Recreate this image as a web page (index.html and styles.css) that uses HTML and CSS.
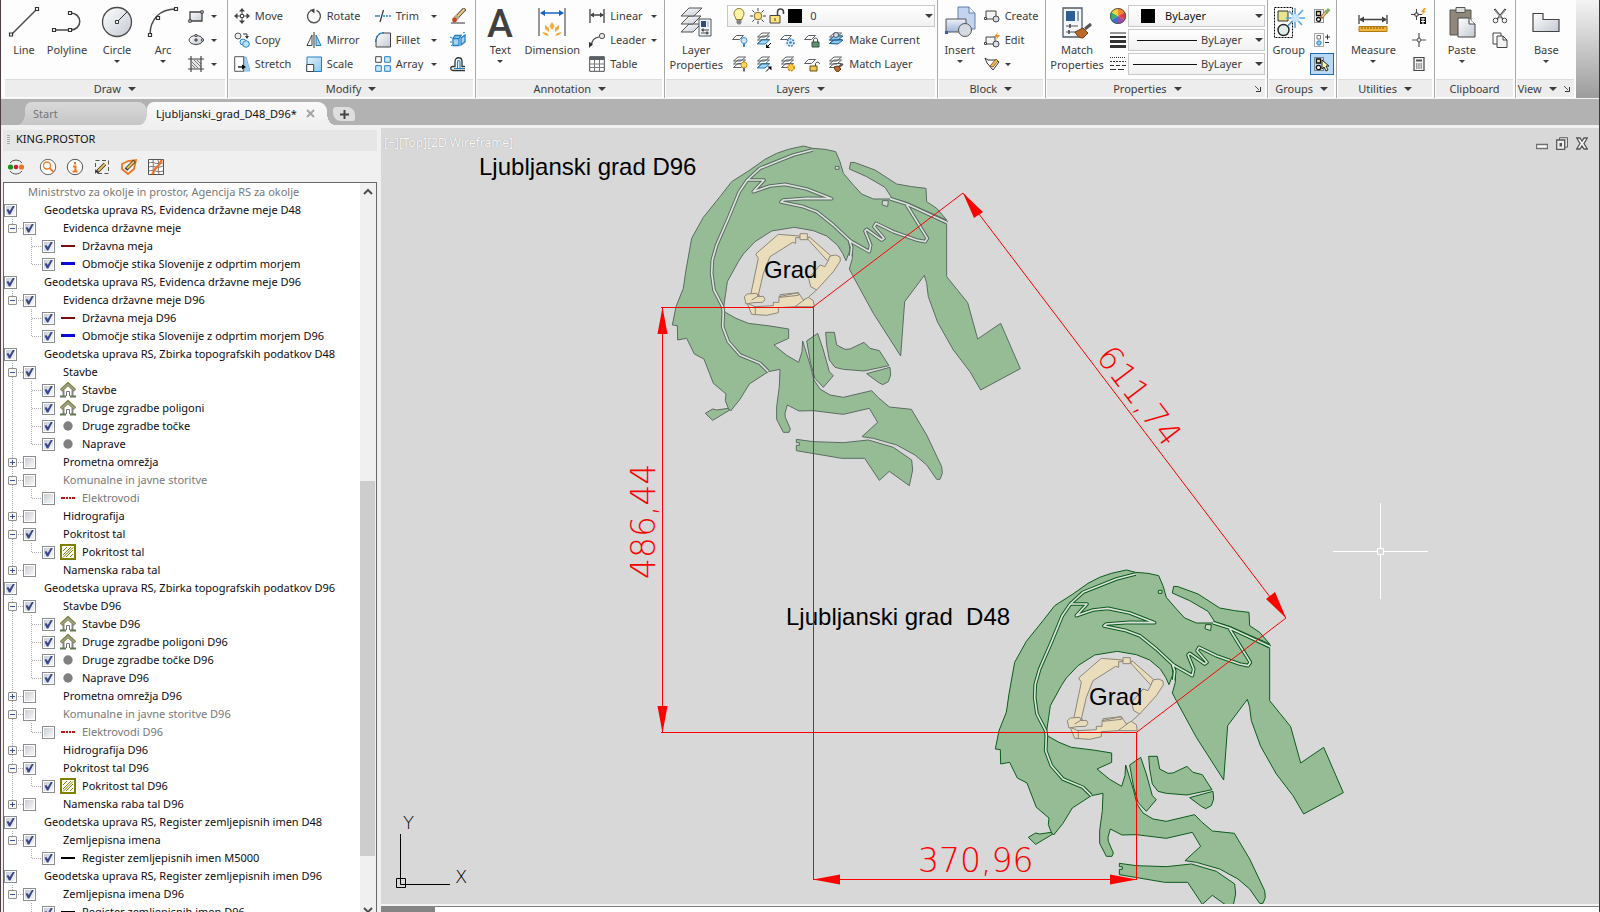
FILE: index.html
```html
<!DOCTYPE html>
<html lang="sl">
<head>
<meta charset="utf-8">
<title>Ljubljanski_grad_D48_D96</title>
<link rel="stylesheet" href="styles.css">
</head>
<body>
<svg class="defs" aria-hidden="true">
  <defs>
    <linearGradient id="steel" x1="0" y1="0" x2="1" y2="1"><stop offset="0" stop-color="#fff"/><stop offset="1" stop-color="#c3c9d3"/></linearGradient>
    <linearGradient id="sky" x1="0" y1="0" x2="1" y2="1"><stop offset="0" stop-color="#e3f3fc"/><stop offset="1" stop-color="#8cc8ec"/></linearGradient>
    <linearGradient id="bluegrey" x1="0" y1="0" x2="0" y2="1"><stop offset="0" stop-color="#eef2fa"/><stop offset="1" stop-color="#9fb2d8"/></linearGradient>
    <symbol id="house" viewBox="0 0 16 16"><path d="M1 8.500 8 2l7 6.500" fill="none" stroke="#7d8434" stroke-width="3.500"/><path d="M1 8.500 8 2.500l7 6" fill="none" stroke="#a2a2a2" stroke-width="1.500"/><path d="M3.500 8v6M12.500 8v6" stroke="#858585" stroke-width="2"/><path d="M6.500 14V9.500h3V14" fill="none" stroke="#757575"/><path d="M0 14.500h6M10 14.500h6" stroke="#5f7a50" stroke-width="2"/></symbol>
    <symbol id="dot" viewBox="0 0 16 16"><circle cx="8" cy="8" r="4.700" fill="#808080"/></symbol>
    <symbol id="hatch" viewBox="0 0 16 16"><rect x="1" y="1" width="14" height="14" fill="#fff" stroke="#808000" stroke-width="2"/><path d="M3 7l4-4M3 11l8-8M3 13.500 13 3.500M6 13l7-7M10 13l3-3" stroke="#808000"/></symbol>
    <symbol id="line-brown" viewBox="0 0 16 16"><path d="M1 8h14" stroke="#7b0f0f" stroke-width="2"/></symbol>
    <symbol id="line-blue" viewBox="0 0 16 16"><path d="M1 7.500h14" stroke="#0a0ad2" stroke-width="3"/></symbol>
    <symbol id="line-black" viewBox="0 0 16 16"><path d="M1 8h14" stroke="#000" stroke-width="2"/></symbol>
    <symbol id="line-dash" viewBox="0 0 16 16"><path d="M1 8h14" stroke="#c01414" stroke-width="2" stroke-dasharray="4 1 2 1 2 1"/></symbol>
    <symbol id="sheets" viewBox="0 0 16 16"><path d="M1.500 11.500 6 7.500h7.500l-4.500 4zM1.500 8l4.500-4h7.500L9 8zM1.500 5 6 1h7.500L9 5z" fill="#fff" stroke="#5a5f66"/></symbol>
    <symbol id="sheet" viewBox="0 0 16 16"><path d="M.500 7.500l4-4h7l-4 4z" fill="#fff" stroke="#5a5f66"/></symbol>

    <g id="castle-hill" stroke-linejoin="round">
      <g class="green">
        <path d="M458 55 430 48 385 58 350 70 315 88 270 120 215 155 180 200 130 262 95 325 78 420 70 475 48 530 37 585 52 587 53 630 80 625 103 672 132 687 160 760 198 792 196 812 205 835 212 843 240 808 268 762 325 725 360 718 358 770 350 830 350 868 370 907 387 907 391 897 376 862 375 850 382 825 417 843 460 842 550 853 628 835 653 877 606 920 640 925 710 945 765 975 800 1005 830 1048 840 1048 847 1030 845 1010 800 915 754 838 688 831 655 803 635 782 550 802 510 795 480 777 462 750 452 710 428 633 426 665 416 697 380 676 342 645 386 625 386 597 330 588 265 580 228 565 196 547 190 538 197 490 202 455 235 395 250 372 285 335 335 303 403 292 460 302 500 318 532 345 548 370 558 392 570 360 566 330 578 345 577 385 568 417 580 440 640 550 722 678 734 515 793 436 800 460 805 500 833 577 880 660 930 725 962 780 1081 716 1022 580 953 627 923 518 860 440 860 283 740 224 692 207 640 207 605 192 580 165 550 130 540 95 527 65 495 58z"/>
        <path d="M572 97 585 98 645 120 710 162 755 170 798 175 800 215 830 235 860 270 740 217 695 203 675 172 620 140 568 117z"/>
        <path d="M440 633 473 610 490 660 508 725 520 737 490 772 465 745 452 700z"/>
        <path d="M497 607H523L530 645 555 658 570 657 612 637 630 655 658 662 687 707 612 723 550 718 525 712 508 690 500 645z"/>
        <path d="M620 731 690 712 692 735 685 755 668 764 655 757z"/>
        <path d="M409 928 460 935 550 938 625 930 700 952 755 990 758 1020 748 1067 688 1024 658 1051 614 985H545L409 962V946H418V938H409z"/>
        <path d="M136 850 158 837 170 840 205 835 208 841 158 871z"/>
      </g>
      <g class="road">
        <path d="M458 60 400 75 300 115 262 150 238 185 205 265 170 345 157 390 155 430 162 480 188 530 190 545 188 590 205 635 240 675 300 700 325 725"/>
        <path d="M690 206 740 222 862 278M740 225 802 325 795 335 770 330 700 305 648 280 642 290 672 325 665 330 620 298 615 303 632 345 628 365 575 335 566 328 520 285 470 245 430 230 363 216 370 210 440 205 515 206 440 177 375 163 330 168 280 185 312 150 262 150M568 330 575 352 572 378"/>
      </g>
      <g class="road-bed">
        <path d="M458 60 400 75 300 115 262 150 238 185 205 265 170 345 157 390 155 430 162 480 188 530 190 545 188 590 205 635 240 675 300 700 325 725"/>
        <path d="M690 206 740 222 862 278M740 225 802 325 795 335 770 330 700 305 648 280 642 290 672 325 665 330 620 298 615 303 632 345 628 365 575 335 566 328 520 285 470 245 430 230 363 216 370 210 440 205 515 206 440 177 375 163 330 168 280 185 312 150 262 150M568 330 575 352 572 378"/>
      </g>
      <g class="plot"><path d="M526 109h11v9h-11z"/><path d="M668 212h17l-2 18-17-6z"/></g>
      <g class="walls">
        <path d="M355 313 418 318V323H407V340L398 337 330 380 310 430 295 495 273 490 295 385 287 372z"/>
        <path d="M443 327 447 320 512 377 503 393z"/>
        <path d="M420 311h22v18h-22z"/>
        <path d="M503 395 510 378 527 375 540 381 541 393 520 425 470 480 452 470 446 445 480 405 495 410z"/>
        <path d="M262 520 285 530 340 527V517H357V500L415 488 430 510 445 502 460 512 463 530 405 530 355 533V548L320 556 275 553z"/>
        <path d="M253 500 262 492 290 490 295 500 310 499 315 508 308 517 280 518 258 522z"/>
        <path d="M275 510 300 495M286 530V553M360 494l55-6v8l-55 6zM405 530l30-22M445 502l25-22" fill="none"/>
      </g>
    </g>
  </defs>
</svg>

<header class="ribbon">
  <section class="panel draw" aria-label="Draw">
    <div class="panel-body">
      <button class="big"><svg width="32" height="32" viewBox="0 0 32 32"><path d="M4 28 28 4" stroke="#4a4a4a" stroke-width="1.500"/><g fill="#fff" stroke="#333" stroke-width="1.200"><path d="M1.500 27h3v3h-3zM27.500 1.500h3v3h-3z"/></g></svg><span>Line</span></button>
      <button class="big"><svg width="32" height="32" viewBox="0 0 32 32"><path d="M3 24h16c13 0 13-17 0-17" fill="none" stroke="#4a4a4a" stroke-width="1.500"/><g fill="#fff" stroke="#333" stroke-width="1.200"><path d="M1.500 22.500h3v3h-3zM17.500 22.500h3v3h-3zM17.500 5.500h3v3h-3z"/></g></svg><span>Polyline</span></button>
      <button class="big"><svg width="32" height="32" viewBox="0 0 32 32"><circle cx="16" cy="16" r="14.500" fill="url(#steel)" stroke="#4a4a4a" stroke-width="1.300"/><path d="M16 16 26 6" stroke="#333"/><path d="M14.500 14.500h3v3h-3z" fill="#fff" stroke="#333"/></svg><span>Circle</span><i class="caret"></i></button>
      <button class="big"><svg width="32" height="32" viewBox="0 0 32 32"><path d="M3 29C3 13 13 3 29 3" fill="none" stroke="#4a4a4a" stroke-width="1.500"/><g fill="#fff" stroke="#333" stroke-width="1.200"><path d="M1.500 27.500h3v3h-3zM9.500 10.500h3v3h-3zM27.500 1.500h3v3h-3z"/></g></svg><span>Arc</span><i class="caret"></i></button>
      <div class="stack tight">
        <button class="small" aria-label="Rectangle"><svg width="16" height="16" viewBox="0 0 16 16"><path d="M2 4h12v9H2z" fill="url(#steel)" stroke="#444" stroke-width="1.300"/><path d="M.800 11.800h2.400v2.400H.800zM12.800 2.800h2.400v2.400h-2.400z" fill="#fff" stroke="#333"/></svg><i class="caret"></i></button>
        <button class="small" aria-label="Ellipse"><svg width="16" height="16" viewBox="0 0 16 16"><ellipse cx="8" cy="8" rx="7" ry="4.500" fill="url(#steel)" stroke="#444"/><path d="M8 6v4M6 8h4" stroke="#333"/><path d="M7 2.500h2v2H7zM13.500 7h2v2h-2z" fill="#fff" stroke="#333" stroke-width=".800"/></svg><i class="caret"></i></button>
        <button class="small" aria-label="Hatch"><svg width="16" height="16" viewBox="0 0 16 16"><path d="M3 3h10v10H3z" fill="#e6e6e6"/><path d="M4 6l6 6M4 9l3 3M6 4l7 7M9 4l4 4" stroke="#777"/><path d="M3 0v16M13 0v16M0 3h16M0 13h16" stroke="#444" stroke-width="1.200"/></svg><i class="caret"></i></button>
      </div>
    </div>
    <button class="panel-title">Draw <i class="caret lg"></i></button>
  </section>

  <section class="panel modify" aria-label="Modify">
    <div class="panel-body">
      <div class="stack">
        <button class="small"><svg width="16" height="16" viewBox="0 0 16 16"><path d="M8 0l3 3.500H5zM8 16l3-3.500H5zM0 8l3.500-3v6zM16 8l-3.500-3v6z" fill="#444"/><path d="M8 3v3M8 10v3M3 8h3M10 8h3" stroke="#444"/><path d="M6.500 6.500h3v3h-3z" fill="#fff" stroke="#444"/></svg><span>Move</span></button>
        <button class="small"><svg width="16" height="16" viewBox="0 0 16 16"><circle cx="4" cy="4" r="3" fill="#eee" stroke="#555"/><circle cx="9" cy="10" r="3" fill="#d5ebfa" stroke="#2b88c8"/><circle cx="12" cy="12" r="3.300" fill="#bfe0f6" stroke="#2b88c8"/><path d="M9 2h4v3" fill="none" stroke="#333"/><path d="M11 4h4l-2 3z" fill="#333"/></svg><span>Copy</span></button>
        <button class="small"><svg width="16" height="16" viewBox="0 0 16 16"><path d="M9 1h3l4 14H9z" fill="#9dd0f2" stroke="#7bb8e2"/><path d="M.700.700h9v14.600h-9z" fill="#fff" stroke="#555"/><path d="M4 11h5" stroke="#000" stroke-width="1.300"/><path d="M8 8.500l4 2.500-4 2.500z"/></svg><span>Stretch</span></button>
      </div>
      <div class="stack">
        <button class="small"><svg width="16" height="16" viewBox="0 0 16 16"><path d="M5 2.500a6.500 6.500 0 1 0 5.500-.200" fill="none" stroke="#555" stroke-width="1.400"/><path d="M8.500.500v5L4 2z" fill="#444"/></svg><span>Rotate</span></button>
        <button class="small"><svg width="16" height="16" viewBox="0 0 16 16"><path d="M6 3v10.500H1z" fill="#fff" stroke="#444"/><path d="M10 3v10.500h5z" fill="#9dd0f2" stroke="#1f7fc4"/><path d="M8 0v16" stroke="#333"/></svg><span>Mirror</span></button>
        <button class="small"><svg width="16" height="16" viewBox="0 0 16 16"><path d="M1 1h14.500v14.500H1z" fill="url(#sky)" stroke="#1f7fc4"/><path d="M.700 8.500h7v7h-7z" fill="#fff" stroke="#444"/></svg><span>Scale</span></button>
      </div>
      <div class="stack">
        <button class="small wide"><svg width="16" height="16" viewBox="0 0 16 16"><path d="M0 8h5M8 8h2M11 8h2M14 8h2" stroke="#2b88c8" stroke-width="1.300"/><path d="M8.500 2 5 14" stroke="#333" stroke-width="1.200"/></svg><span>Trim</span><i class="caret"></i></button>
        <button class="small wide"><svg width="16" height="16" viewBox="0 0 16 16"><path d="M8 1h7.500v14H1V9c0-4.500 3-8 7-8z" fill="url(#steel)" stroke="#444"/><path d="M.700 10C.700 4.500 4 .700 9 .700" fill="none" stroke="#1f7fc4" stroke-width="1.400" stroke-dasharray="3 1"/></svg><span>Fillet</span><i class="caret"></i></button>
        <button class="small wide"><svg width="16" height="16" viewBox="0 0 16 16"><path d="M.700.700h5.600v5.600H.700z" fill="#fff" stroke="#444"/><path d="M9.700.700h5.600v5.600H9.700zM.700 9.700h5.600v5.600H.700zM9.700 9.700h5.600v5.600H9.700z" fill="#cfe8f8" stroke="#1f7fc4"/></svg><span>Array</span><i class="caret"></i></button>
      </div>
      <div class="stack">
        <button class="small" aria-label="Erase"><svg width="16" height="16" viewBox="0 0 16 16"><path d="M15 .500 7 9" stroke="#3a3a3a" stroke-width="4"/><path d="M14.500 1 7 9" stroke="#f1c878" stroke-width="2.500"/><path d="M8 8l-3 3" stroke="#b9a68c" stroke-width="5"/><circle cx="4.500" cy="12" r="2.400" fill="#c4471c"/><path d="M1 15h14" stroke="#333"/></svg></button>
        <button class="small" aria-label="Explode"><svg width="16" height="16" viewBox="0 0 16 16"><path d="M3 6.500h6v7H3zM3 6.500l2-3h6l-2 3M11 6l4-3v7l-4 3z" fill="#a4d4f2" stroke="#1f7fc4" stroke-width="1.300"/><path d="M0 5l2 1M0 10h2M13 1l2-1M1 14l1-1" stroke="#1f7fc4"/></svg></button>
        <button class="small" aria-label="Offset"><svg width="16" height="16" viewBox="0 0 16 16"><path d="M15 14.500H3c-3 0-3-4 0-4h2V5.500c0-5 7-5 7 0v5h3" fill="none" stroke="#333" stroke-width="1.300"/><path d="M15 12.500H4M7.500 12V6c0-2 2.500-2 2.500 0v6" fill="none" stroke="#1f7fc4" stroke-width="1.200"/></svg></button>
      </div>
    </div>
    <button class="panel-title">Modify <i class="caret lg"></i></button>
  </section>

  <section class="panel annotation" aria-label="Annotation">
    <div class="panel-body">
      <button class="big"><svg width="32" height="32" viewBox="0 0 32 32"><text x="16" y="31" text-anchor="middle" class="letter">A</text></svg><span>Text</span><i class="caret"></i></button>
      <button class="big"><svg width="32" height="32" viewBox="0 0 32 32"><path d="M3 2v28M29 2v28" stroke="#555" stroke-width="1.200"/><path d="M5 7h22" stroke="#1763c0" stroke-width="1.500"/><path d="M4 7l5-3v6zM28 7l-5-3v6z" fill="#1763c0"/><path d="M16 16l2.500 4-2.500 4-2.500-4zM9 19l4 3v4l-4-3zM23 19l-4 3v4l4-3zM6 26l5 1 2 3-4-1zM26 26l-5 1-2 3 4-1z" fill="#f2a93c"/></svg><span>Dimension</span></button>
      <div class="stack">
        <button class="small wide"><svg width="16" height="16" viewBox="0 0 16 16"><path d="M1 1v14M15 1v14M2 7h12" stroke="#444" stroke-width="1.300"/><path d="M1 7l4-2.500v5zM15 7l-4-2.500v5z" fill="#444"/></svg><span>Linear</span><i class="caret"></i></button>
        <button class="small wide"><svg width="16" height="16" viewBox="0 0 16 16"><path d="M2 14C3 8 5 6 10 5" fill="none" stroke="#444" stroke-width="1.200"/><path d="M0 16V10l4 2z" fill="#333"/><circle cx="13" cy="4" r="2.700" fill="#e4e4e4" stroke="#555"/></svg><span>Leader</span><i class="caret"></i></button>
        <button class="small"><svg width="16" height="16" viewBox="0 0 16 16"><path d="M.700.700h14.600v14.600H.700z" fill="#fff" stroke="#4a4f55"/><path d="M1 1h14v3H1z" fill="#586068"/><path d="M1 8h14M1 11.500h14M5.500 4v11M10.500 4v11" stroke="#777"/></svg><span>Table</span></button>
      </div>
    </div>
    <button class="panel-title">Annotation <i class="caret lg"></i></button>
  </section>

  <section class="panel layers" aria-label="Layers">
    <div class="panel-body">
      <button class="big"><svg width="32" height="32" viewBox="0 0 32 32"><g fill="url(#steel)" stroke="#555"><path d="M1 26l8-8h12l-8 8z"/><path d="M1 18l8-8h12l-8 8z"/><path d="M1 10l8-8h13l-8 8z"/></g><path d="M19 13h12v17H19z" fill="#f3f6fa" stroke="#4a5560"/><path d="M21 15h5v6h-5z" fill="#2c4f7c"/><path d="M28 15v6" stroke="#8fa3ba"/><path d="M21 24h8M21 27h8" stroke="#444"/><path d="M23 22.500v3M27 25.500v3" stroke="#444" stroke-width="1.500"/></svg><span>Layer<br>Properties</span></button>
      <div class="layer-tools">
        <label class="combo current">
          <svg width="16" height="18" viewBox="0 0 16 18"><path d="M5 12.500C5 10 3 9.500 3 6.500a5 5 0 0 1 10 0c0 3-2 3.500-2 6z" fill="#fff3a6" stroke="#8a7a2c"/><path d="M5.500 13h5v3l-1.500 1.500H7L5.500 16z" fill="#858585"/></svg>
          <svg width="16" height="16" viewBox="0 0 16 16"><path d="M8 0v3M8 13v3M0 8h3M13 8h3M2.300 2.300l2.200 2.200M11.500 11.500l2.200 2.200M13.700 2.300l-2.200 2.200M4.500 11.500l-2.200 2.200" stroke="#444"/><circle cx="8" cy="8" r="3.800" fill="#ffe27a" stroke="#7a6a2c"/></svg>
          <svg width="16" height="16" viewBox="0 0 16 16"><path d="M8.500 8V4c0-4 6-4 6 0v2" fill="none" stroke="#444" stroke-width="1.500"/><path d="M1 7.500h10v7.500H1z" fill="#ffe27a" stroke="#444"/><path d="M6 10v3" stroke="#444"/></svg>
          <i class="swatch"></i>
          <select aria-label="Layer"><option>0</option></select><i class="caret lg"></i>
        </label>
        <div class="tool-row">
          <button class="small" aria-label="Off"><svg width="16" height="16" viewBox="0 0 16 16"><use href="#sheet"/><circle cx="12" cy="8.500" r="3" fill="#cfe6fa" stroke="#3c8dcc"/><path d="M11 11.500h2V15h-2z" fill="#3c8dcc"/></svg></button>
          <button class="small" aria-label="Isolate"><svg width="16" height="16" viewBox="0 0 16 16"><use href="#sheets"/><path d="M1.500 12 6 8h7.500L9 12z" fill="#a9d8f5" stroke="#1f7fc4"/><path d="M15 11l-4 4" stroke="#000"/><path d="M10 12v4h4z"/></svg></button>
          <button class="small" aria-label="Freeze"><svg width="16" height="16" viewBox="0 0 16 16"><use href="#sheet"/><circle cx="10.500" cy="10.500" r="3.500" fill="#dcefff" stroke="#2b7fc8" stroke-width="1.500" stroke-dasharray="2 1"/><circle cx="10.500" cy="10.500" r="1.300" fill="#2b7fc8"/></svg></button>
          <button class="small" aria-label="Lock"><svg width="16" height="16" viewBox="0 0 16 16"><use href="#sheet"/><path d="M9.500 10V8c0-2.500 4-2.500 4 0v2" fill="none" stroke="#444"/><path d="M8 10h7v5H8z" fill="#5f8f72" stroke="#37553f"/></svg></button>
          <button class="small"><svg width="16" height="16" viewBox="0 0 16 16"><use href="#sheets"/><path d="M1.500 8 6 4h9L10 8zM1.500 11.500 6 8h9l-5 4z" fill="#8cc8ec" stroke="#1c5f94"/><circle cx="8" cy="3" r="2.500" fill="#d6dde6" stroke="#4a5a6a"/></svg><span>Make Current</span></button>
        </div>
        <div class="tool-row">
          <button class="small" aria-label="Turn all on"><svg width="16" height="16" viewBox="0 0 16 16"><use href="#sheets"/><circle cx="12" cy="9" r="3" fill="#ffd75a" stroke="#c98a12"/><path d="M11 12h2v3.500h-2z" fill="#666"/></svg></button>
          <button class="small" aria-label="Unisolate"><svg width="16" height="16" viewBox="0 0 16 16"><use href="#sheets"/><path d="M1.500 12 6 8h7.500L9 12z" fill="#a9d8f5" stroke="#1f7fc4"/><path d="M10 15.500l4-4" stroke="#000"/><path d="M11.500 10.500h4v4z"/></svg></button>
          <button class="small" aria-label="Thaw all"><svg width="16" height="16" viewBox="0 0 16 16"><use href="#sheets"/><circle cx="11" cy="11.500" r="3.200" fill="#ffcf4a" stroke="#d38414" stroke-width="1.500" stroke-dasharray="2 1"/></svg></button>
          <button class="small" aria-label="Unlock"><svg width="16" height="16" viewBox="0 0 16 16"><use href="#sheet"/><path d="M11.500 10V8c0-2.500 4-2.500 4 0" fill="none" stroke="#444"/><path d="M6 10h7v5H6z" fill="#f2c94c" stroke="#6b5314"/></svg></button>
          <button class="small"><svg width="16" height="16" viewBox="0 0 16 16"><use href="#sheets"/><path d="M15 8l-4 3" stroke="#555" stroke-width="2"/><path d="M6 11l4-1 3 3-3 3c-2 0-3-2-4-5z" fill="#b8682c" stroke="#6e3c14"/></svg><span>Match Layer</span></button>
        </div>
      </div>
    </div>
    <button class="panel-title">Layers <i class="caret lg"></i></button>
  </section>

  <section class="panel block" aria-label="Block">
    <div class="panel-body">
      <button class="big"><svg width="32" height="32" viewBox="0 0 32 32"><path d="M14 1h11l6 6v16H14z" fill="#c3d5ee" stroke="#5c7ca8"/><path d="M25 1v6h6" fill="#eef4fc" stroke="#5c7ca8"/><path d="M2 13h20v13H2z" fill="url(#bluegrey)" stroke="#555"/><circle cx="21" cy="24" r="6.500" fill="#d4d9e2" stroke="#555"/><path d="M1 25h3v3H1z" fill="#2a5fc0"/></svg><span>Insert</span><i class="caret"></i></button>
      <div class="stack">
        <button class="small"><svg width="16" height="16" viewBox="0 0 16 16"><path d="M2 3h10v8H2z" fill="#f4f4f4" stroke="#444"/><circle cx="12" cy="11" r="3" fill="#d8dde4" stroke="#444"/><path d="M.500 9.500h2v2h-2z" fill="#fff" stroke="#444"/></svg><span>Create</span></button>
        <button class="small"><svg width="16" height="16" viewBox="0 0 16 16"><path d="M2 5h9v7H2z" fill="#f4f4f4" stroke="#444"/><circle cx="12" cy="12" r="3" fill="#d8dde4" stroke="#444"/><path d="M.500 10.500h2v2h-2z" fill="#fff" stroke="#444"/><path d="M14 0l-4 5h3l-1 3 4-5h-3z" fill="#f28a1c"/></svg><span>Edit</span></button>
        <button class="small" aria-label="Attributes"><svg width="16" height="16" viewBox="0 0 16 16"><path d="M1 2l3 2h9l2 2-6 8-6-7z" fill="#fff" stroke="#333"/><path d="M6 10l6-7 2 2-5 6z" fill="#f0b75a" stroke="#7a4a14" stroke-width=".800"/></svg><i class="caret"></i></button>
      </div>
    </div>
    <button class="panel-title">Block <i class="caret lg"></i></button>
  </section>

  <section class="panel properties" aria-label="Properties">
    <div class="panel-body">
      <button class="big"><svg width="32" height="32" viewBox="0 0 32 32"><path d="M2 2h19v29H2z" fill="#f4f7fb" stroke="#4f5c68" stroke-width="1.300"/><path d="M5 5h9v10H5z" fill="#2d5f96"/><path d="M17 5v10" stroke="#8fa3ba" stroke-width="2"/><path d="M5 20h12M5 26h10" stroke="#555"/><path d="M9 18v4M8 24v4" stroke="#444" stroke-width="1.500"/><path d="M30 18l-6 5" stroke="#555" stroke-width="3"/><path d="M14 26l8-4 5 5-5 5c-4 0-6-2-8-6z" fill="#b96a2a" stroke="#6e3c14"/></svg><span>Match<br>Properties</span></button>
      <div class="prop-grid">
        <svg width="16" height="16" viewBox="0 0 16 16"><path d="M8 8V0a8 8 0 0 1 7 4z" fill="#f28a2c"/><path d="M8 8l7-4a8 8 0 0 1 0 8z" fill="#e0413c"/><path d="M8 8l7 4a8 8 0 0 1-7 4z" fill="#a14aa8"/><path d="M8 8v8a8 8 0 0 1-7-4z" fill="#3e6fd0"/><path d="M8 8l-7 4a8 8 0 0 1 0-8z" fill="#3fae6a"/><path d="M8 8 1 4a8 8 0 0 1 7-4z" fill="#f2d13c"/><circle cx="8" cy="8" r="7.500" fill="none" stroke="#555"/></svg>
        <label class="combo"><i class="swatch"></i><select aria-label="Color" class="dark"><option>ByLayer</option></select><i class="caret lg"></i></label>
        <svg width="16" height="16" viewBox="0 0 16 16"><path d="M0 1h16" stroke="#333"/><path d="M0 5h16" stroke="#333" stroke-width="2"/><path d="M0 9.500h16M0 14.500h16" stroke="#333" stroke-width="3"/></svg>
        <label class="combo"><i class="rule"></i><select aria-label="Lineweight"><option>ByLayer</option></select><i class="caret lg"></i></label>
        <svg width="16" height="16" viewBox="0 0 16 16"><g stroke="#333"><path d="M0 1.500h16" stroke-dasharray="1 1"/><path d="M0 5.500h16" stroke-dasharray="2 1"/><path d="M0 9.500h16" stroke-dasharray="4 2"/><path d="M0 13.500h16" stroke-dasharray="6 2"/></g></svg>
        <label class="combo"><i class="rule long"></i><select aria-label="Linetype"><option>ByLayer</option></select><i class="caret lg"></i></label>
      </div>
    </div>
    <div class="panel-title split"><button class="title-btn">Properties <i class="caret lg"></i></button><button class="launcher" aria-label="Properties dialog"><svg width="6" height="6" viewBox="0 0 6 6"><path d="M0 0l4 4" stroke="#555"/><path d="M5.500 1v4.500H1" fill="none" stroke="#333"/></svg></button></div>
  </section>

  <section class="panel groups" aria-label="Groups">
    <div class="panel-body">
      <button class="big"><svg width="32" height="32" viewBox="0 0 32 32"><path d="M1.500 1.500h18v30h-18z" fill="none" stroke="#000" stroke-dasharray="2 1"/><path d="M5 5h10v10H5z" fill="#e9e48e" stroke="#333"/><circle cx="10.500" cy="24" r="5.500" fill="#dfeee8" stroke="#222" stroke-width="1.400"/><path d="M14 20l7-7" stroke="#555"/><g stroke="#5aa5e2" stroke-width="1.600"><path d="M22 2v20M13 12h19M16 5l13 14M30 4 15 20"/></g><circle cx="22.500" cy="12" r="4" fill="#c9e5fb"/></svg><span>Group</span></button>
      <div class="stack center">
        <button class="small" aria-label="Ungroup"><svg width="16" height="16" viewBox="0 0 16 16"><path d="M.500 1.500h9v13h-9z" fill="none" stroke="#333" stroke-dasharray="1 1"/><path d="M2.500 3.500h4v4h-4z" fill="#f5efa0" stroke="#111" stroke-width="1.300"/><circle cx="4.500" cy="11.500" r="2" fill="#fff" stroke="#111" stroke-width="1.300"/><path d="M7 10l6-7" stroke="#8a5a2a" stroke-width="3"/><path d="M8 9l4-5" stroke="#e8c98a" stroke-width="2"/><path d="M12 5l3-4" stroke="#7fae5a" stroke-width="3"/></svg></button>
        <button class="small" aria-label="Group edit"><svg width="16" height="16" viewBox="0 0 16 16"><path d="M.500 1.500h9v13h-9z" fill="none" stroke="#555" stroke-dasharray="1 1"/><path d="M3 3.500h3.500v3.500H3z" fill="#fff" stroke="#777"/><circle cx="5" cy="11" r="2.200" fill="#8ecbf4" stroke="#2b88c8"/><path d="M11 5h5M13.500 2.500v5M11 10.500h4" stroke="#333"/></svg></button>
        <button class="small active" aria-label="Group selection" aria-pressed="true"><svg width="16" height="16" viewBox="0 0 16 16"><path d="M.500 1.500h9v13h-9z" fill="none" stroke="#333" stroke-dasharray="1 1"/><path d="M2.500 3h4v4h-4z" fill="#f5efa0" stroke="#111" stroke-width="1.300"/><circle cx="4.500" cy="11.500" r="2.200" fill="#fff" stroke="#111" stroke-width="1.300"/><path d="M8 4v9l2-2 2 4 2-1-2-4h3z" fill="#fff6b0" stroke="#222"/></svg></button>
      </div>
    </div>
    <button class="panel-title">Groups <i class="caret lg"></i></button>
  </section>

  <section class="panel utilities" aria-label="Utilities">
    <div class="panel-body">
      <button class="big"><svg width="32" height="32" viewBox="0 0 32 32"><path d="M2 9v9M30 9v9M3 13.500h26" stroke="#444" stroke-width="1.300"/><path d="M2 13.500l5-3v6zM30 13.500l-5-3v6z" fill="#444"/><path d="M2 20.500h28v5H2z" fill="#f2b63a" stroke="#b07a14"/><path d="M5 21v2M8 21v2M11 21v2M14 21v2M17 21v2M20 21v2M23 21v2M26 21v2" stroke="#7a5510"/></svg><span>Measure</span><i class="caret"></i></button>
      <div class="stack center">
        <button class="small" aria-label="Quick select"><svg width="16" height="16" viewBox="0 0 16 16"><path d="M5.500 1v11M0 6.500h11" stroke="#444"/><path d="M4 5h3v3H4z" fill="#fff" stroke="#444"/><path d="M13 0l-3 4h2l-1 3 4-4h-2l2-3z" fill="#f2982c"/><path d="M9 9h6v7H9z" fill="#111"/><path d="M10 11h4M10 13.500h4M12 10v6" stroke="#fff"/></svg></button>
        <button class="small" aria-label="Point"><svg width="16" height="16" viewBox="0 0 16 16"><path d="M8 1v14M1 8h14" stroke="#555" stroke-width="1.200"/><circle cx="8" cy="8" r="2" fill="#ddd" stroke="#555"/></svg></button>
        <button class="small" aria-label="Calculator"><svg width="16" height="16" viewBox="0 0 16 16"><path d="M3 1.500h10v13H3z" fill="#f4f4f4" stroke="#444" stroke-width="1.200"/><path d="M5 3.500h6v2H5z" fill="#555"/><path d="M5 8h6M5 10h6M5 12h6" stroke="#444" stroke-dasharray="1.500 .750"/></svg></button>
      </div>
    </div>
    <button class="panel-title">Utilities <i class="caret lg"></i></button>
  </section>

  <section class="panel clipboard" aria-label="Clipboard">
    <div class="panel-body">
      <button class="big"><svg width="32" height="32" viewBox="0 0 32 32"><path d="M4 4h21v25H4z" fill="#8f877a" stroke="#555"/><path d="M10 1.500h9v5h-9z" fill="#ddd" stroke="#555"/><path d="M12 12h11l6 6v13H12z" fill="url(#steel)" stroke="#444"/><path d="M23 12v6h6" fill="#fff" stroke="#444"/></svg><span>Paste</span><i class="caret"></i></button>
      <div class="stack center">
        <button class="small" aria-label="Cut"><svg width="16" height="16" viewBox="0 0 16 16"><path d="M2.500 1l8 10M13.500 1l-8 10" stroke="#444" stroke-width="2"/><path d="M3 2l7 9M13 2l-7 9" stroke="#ddd" stroke-width=".700"/><circle cx="3.500" cy="12.500" r="2.300" fill="none" stroke="#444"/><circle cx="12.500" cy="12.500" r="2.300" fill="none" stroke="#444"/></svg></button>
        <button class="small" aria-label="Copy clip"><svg width="16" height="16" viewBox="0 0 16 16"><path d="M1 1h8v11H1z" fill="#fff" stroke="#444"/><path d="M5 4h6l4 4v7.500H5z" fill="#f2f2f2" stroke="#444"/><path d="M11 4v4h4" fill="none" stroke="#444"/></svg></button>
      </div>
    </div>
    <div class="panel-title">Clipboard</div>
  </section>

  <section class="panel view" aria-label="View">
    <div class="panel-body">
      <button class="big"><svg width="32" height="32" viewBox="0 0 32 32"><path d="M3 7.500h10v6h16v12H3z" fill="url(#steel)" stroke="#444" stroke-width="1.200"/></svg><span>Base</span><i class="caret"></i></button>
    </div>
    <div class="panel-title split"><button class="title-btn">View <i class="caret lg"></i></button><button class="launcher" aria-label="View dialog"><svg width="6" height="6" viewBox="0 0 6 6"><path d="M0 0l4 4" stroke="#555"/><path d="M5.500 1v4.500H1" fill="none" stroke="#333"/></svg></button></div>
  </section>
  <div class="ribbon-end"></div>
</header>

<nav class="tabs">
  <button class="tab start">Start</button>
  <div class="tab open"><span>Ljubljanski_grad_D48_D96*</span><button class="tab-close" aria-label="Close tab"><svg width="9" height="9" viewBox="0 0 9 9"><path d="M1 1l7 7M8 1 1 8" stroke="#a3a3a3" stroke-width="2"/></svg></button></div>
  <button class="tab-new" aria-label="New tab"><svg width="9" height="9" viewBox="0 0 9 9"><path d="M4.500 0v9M0 4.500h9" stroke="#444" stroke-width="2"/></svg></button>
</nav>

<div class="workspace">
  <aside class="palette">
    <h2 class="palette-title"><i class="grip"></i>KING.PROSTOR</h2>
    <div class="palette-tools">
      <button aria-label="Layers"><svg width="18" height="18" viewBox="0 0 18 18"><path d="M3 5a7.500 7.500 0 0 1 12 0M3 13a7.500 7.500 0 0 0 12 0" fill="none" stroke="#555"/><circle cx="3.500" cy="9" r="2.600" fill="#1f8f1f"/><circle cx="9" cy="9" r="2.300" fill="#d01c2c"/><circle cx="14.500" cy="9" r="2.600" fill="#ee7420"/></svg></button>
      <button aria-label="Search"><svg width="18" height="18" viewBox="0 0 18 18"><circle cx="9" cy="9" r="7.700" fill="#fff" stroke="#666"/><circle cx="8" cy="7.500" r="3.500" fill="none" stroke="#ee8030" stroke-width="1.400"/><path d="M10.500 10l4 4" stroke="#ee8030" stroke-width="2"/></svg></button>
      <button aria-label="Info"><svg width="18" height="18" viewBox="0 0 18 18"><circle cx="9" cy="9" r="7.700" fill="#fff" stroke="#555"/><path d="M9 4v2.500M7 8.500h2.500V13M6.500 13.500h5" fill="none" stroke="#ee7420" stroke-width="2"/></svg></button>
      <button aria-label="Select"><svg width="18" height="18" viewBox="0 0 18 18"><path d="M2.500 2.500h13v13h-13z" fill="none" stroke="#555" stroke-dasharray="4 2.500"/><path d="M3.500 14.500 12 6" stroke="#333" stroke-width="3.500"/><path d="M5 13 12 6" stroke="#f0c050" stroke-width="2"/></svg></button>
      <button aria-label="Edit"><svg width="18" height="18" viewBox="0 0 18 18"><path d="M2 6l6-3 8-1-2 9-6 5-6-5z" fill="none" stroke="#ee7420" stroke-width="1.800"/><path d="M6 11.500 14.500 3" stroke="#333" stroke-width="3.500"/><path d="M7 10.500 14 3.500" stroke="#f0c050" stroke-width="2"/></svg></button>
      <button aria-label="Map"><svg width="18" height="18" viewBox="0 0 18 18"><path d="M1.500 1.500h15v15h-15z" fill="#fff" stroke="#555"/><path d="M2 5c4-2 6 2 14 0M2 9c5-2 8 2 14-1M2 13c4-2 8 2 14 0M6 2c1 5-1 9 1 14M11 2c2 5-1 9 1 14" fill="none" stroke="#777"/><path d="M15 2c-3 4-2 5-5 7s-2 4-5 7" fill="none" stroke="#ee7420" stroke-width="2.200"/></svg></button>
    </div>
    <div class="tree-box">
      <ul class="tree">
        <li class="n0 off note">Ministrstvo za okolje in prostor, Agencija RS za okolje</li>
        <li class="n0"><label><input type="checkbox" checked>Geodetska uprava RS, Evidenca državne meje D48</label></li>
        <li class="n1 last"><button class="exp minus" aria-label="Collapse"></button><label><input type="checkbox" checked>Evidenca državne meje</label></li>
        <li class="n2"><label><input type="checkbox" checked><svg><use href="#line-brown"/></svg>Državna meja</label></li>
        <li class="n2 last"><label><input type="checkbox" checked><svg><use href="#line-blue"/></svg>Območje stika Slovenije z odprtim morjem</label></li>
        <li class="n0"><label><input type="checkbox" checked>Geodetska uprava RS, Evidenca državne meje D96</label></li>
        <li class="n1 last"><button class="exp minus" aria-label="Collapse"></button><label><input type="checkbox" checked>Evidenca državne meje D96</label></li>
        <li class="n2"><label><input type="checkbox" checked><svg><use href="#line-brown"/></svg>Državna meja D96</label></li>
        <li class="n2 last"><label><input type="checkbox" checked><svg><use href="#line-blue"/></svg>Območje stika Slovenije z odprtim morjem D96</label></li>
        <li class="n0"><label><input type="checkbox" checked>Geodetska uprava RS, Zbirka topografskih podatkov D48</label></li>
        <li class="n1"><button class="exp minus" aria-label="Collapse"></button><label><input type="checkbox" checked>Stavbe</label></li>
        <li class="n2 trunk"><label><input type="checkbox" checked><svg><use href="#house"/></svg>Stavbe</label></li>
        <li class="n2 trunk"><label><input type="checkbox" checked><svg><use href="#house"/></svg>Druge zgradbe poligoni</label></li>
        <li class="n2 trunk"><label><input type="checkbox" checked><svg><use href="#dot"/></svg>Druge zgradbe točke</label></li>
        <li class="n2 trunk last"><label><input type="checkbox" checked><svg><use href="#dot"/></svg>Naprave</label></li>
        <li class="n1"><button class="exp plus" aria-label="Expand"></button><label><input type="checkbox">Prometna omrežja</label></li>
        <li class="n1 off"><button class="exp minus" aria-label="Collapse"></button><label><input type="checkbox">Komunalne in javne storitve</label></li>
        <li class="n2 trunk last off"><label><input type="checkbox"><svg><use href="#line-dash"/></svg>Elektrovodi</label></li>
        <li class="n1"><button class="exp plus" aria-label="Expand"></button><label><input type="checkbox">Hidrografija</label></li>
        <li class="n1"><button class="exp minus" aria-label="Collapse"></button><label><input type="checkbox" checked>Pokritost tal</label></li>
        <li class="n2 trunk last"><label><input type="checkbox" checked><svg><use href="#hatch"/></svg>Pokritost tal</label></li>
        <li class="n1 last"><button class="exp plus" aria-label="Expand"></button><label><input type="checkbox">Namenska raba tal</label></li>
        <li class="n0"><label><input type="checkbox" checked>Geodetska uprava RS, Zbirka topografskih podatkov D96</label></li>
        <li class="n1"><button class="exp minus" aria-label="Collapse"></button><label><input type="checkbox" checked>Stavbe D96</label></li>
        <li class="n2 trunk"><label><input type="checkbox" checked><svg><use href="#house"/></svg>Stavbe D96</label></li>
        <li class="n2 trunk"><label><input type="checkbox" checked><svg><use href="#house"/></svg>Druge zgradbe poligoni D96</label></li>
        <li class="n2 trunk"><label><input type="checkbox" checked><svg><use href="#dot"/></svg>Druge zgradbe točke D96</label></li>
        <li class="n2 trunk last"><label><input type="checkbox" checked><svg><use href="#dot"/></svg>Naprave D96</label></li>
        <li class="n1"><button class="exp plus" aria-label="Expand"></button><label><input type="checkbox">Prometna omrežja D96</label></li>
        <li class="n1 off"><button class="exp minus" aria-label="Collapse"></button><label><input type="checkbox">Komunalne in javne storitve D96</label></li>
        <li class="n2 trunk last off"><label><input type="checkbox"><svg><use href="#line-dash"/></svg>Elektrovodi D96</label></li>
        <li class="n1"><button class="exp plus" aria-label="Expand"></button><label><input type="checkbox">Hidrografija D96</label></li>
        <li class="n1"><button class="exp minus" aria-label="Collapse"></button><label><input type="checkbox" checked>Pokritost tal D96</label></li>
        <li class="n2 trunk last"><label><input type="checkbox" checked><svg><use href="#hatch"/></svg>Pokritost tal D96</label></li>
        <li class="n1 last"><button class="exp plus" aria-label="Expand"></button><label><input type="checkbox">Namenska raba tal D96</label></li>
        <li class="n0"><label><input type="checkbox" checked>Geodetska uprava RS, Register zemljepisnih imen D48</label></li>
        <li class="n1 last"><button class="exp minus" aria-label="Collapse"></button><label><input type="checkbox" checked>Zemljepisna imena</label></li>
        <li class="n2 last"><label><input type="checkbox" checked><svg><use href="#line-black"/></svg>Register zemljepisnih imen M5000</label></li>
        <li class="n0"><label><input type="checkbox" checked>Geodetska uprava RS, Register zemljepisnih imen D96</label></li>
        <li class="n1 last"><button class="exp minus" aria-label="Collapse"></button><label><input type="checkbox" checked>Zemljepisna imena D96</label></li>
        <li class="n2 last"><label><input type="checkbox" checked><svg><use href="#line-black"/></svg>Register zemljepisnih imen D96</label></li>
      </ul>
      <div class="scroll">
        <svg width="16" height="18" viewBox="0 0 16 18"><path d="M4 11l4-4 4 4" fill="none" stroke="#505050" stroke-width="2"/></svg>
        <i class="thumb"></i>
        <svg width="16" height="8" viewBox="0 0 16 8"><path d="M4 4l4 4 4-4" fill="none" stroke="#505050" stroke-width="2"/></svg>
      </div>
    </div>
  </aside>

  <main class="drawing">
    <div class="viewport">
      <svg class="model" width="100%" height="100%">
        <g transform="translate(-381 -128)">
          <g class="d96" transform="translate(660 130) scale(.33333)"><use href="#castle-hill"/></g>
          <g class="d48" transform="translate(983 554) scale(.33333)"><use href="#castle-hill"/></g>
          <g class="caption">
            <text x="479" y="175">Ljubljanski grad D96</text>
            <text x="786" y="625" xml:space="preserve">Ljubljanski grad  D48</text>
            <text x="764" y="278">Grad</text>
            <text x="1089" y="705">Grad</text>
          </g>
          <g class="dim-lines">
            <path d="M813.500 307.500H661M662.500 307v426M661 732.500H1137M813.500 307V880M1136.500 732v148M813 879.500h324"/>
            <path d="M813 307 963 193 1286 618 1137 732"/>
          </g>
          <g class="arrows"><path d="M662.500 307l5 27h-10zM662.500 733l5-27h-10zM813 879.500l27-5v10zM1137 879.500l-27-5v10zM963 193l20 19-9 6zM1286 618l-20-19 9-7z"/></g>
          <g class="dim-text">
            <text transform="translate(655 579) rotate(-90)">486,44</text>
            <text x="918" y="872">370,96</text>
            <text transform="translate(1139 396) rotate(52.700)" y="11" text-anchor="middle">611,74</text>
          </g>
          <g class="ucs"><path d="M400.500 834v50.500H450M396.500 878.500h9v9h-9z"/><text x="403" y="829">Y</text><text x="455" y="883">X</text></g>
          <path class="cursor" d="M1333 551.500h44M1384 551.500h44M1380.500 503v45M1380.500 555v44M1377.500 548.500h6v6h-6z"/>
        </g>
      </svg>
      <div class="view-label">[−][Top][2D Wireframe]</div>
      <div class="window-buttons">
        <button aria-label="Minimize"><svg width="12" height="13" viewBox="0 0 12 13"><path d="M.500 7.500h11v4H.500z" fill="#fff" stroke="#6f6f6f" stroke-width="1.300"/></svg></button>
        <button aria-label="Restore"><svg width="12" height="13" viewBox="0 0 12 13"><path d="M3.500.700h8v9.500h-8z" fill="#ddd" stroke="#666"/><path d="M.700 3h8v9.300h-8z" fill="#eee" stroke="#5a5a5a" stroke-width="1.300"/><path d="M3.500 6h2.500v3.500H3.500z" fill="#555"/></svg></button>
        <button aria-label="Close"><svg width="12" height="13" viewBox="0 0 12 13"><path d="M.700 1h3.300l2 3 2-3h3.300L8 6.500l3.300 5.500H8L6 9l-2 3H.700L4 6.500z" fill="#f4f4f4" stroke="#555" stroke-width="1.300"/></svg></button>
      </div>
    </div>
    <div class="command"><i class="model-tab"></i></div>
  </main>
</div>
</body>
</html>
```
FILE: styles.css
```css
* { box-sizing: border-box; }
html, body { height: 100%; }
body {
  margin: 0;
  display: flex;
  flex-direction: column;
  overflow: hidden;
  background: #f0f0f0;
  border-left: 1px solid #4a3f42;
  border-right: 1px solid #3a3a3a;
  font: 11px/16px "Noto Sans", "Open Sans", sans-serif;
  color: #3c3c3c;
}
button, select { font: inherit; color: inherit; background: none; border: 0; padding: 0; margin: 0; }
.defs { position: absolute; width: 0; height: 0; }

/* Ribbon */
.ribbon { display: flex; flex: none; padding-left: 3px; background: #fdfdfd; border-bottom: 1px solid #f4f4f4; }
.panel { display: flex; flex-direction: column; min-width: 0; border-right: 1px solid #a9a9a9; }
.draw { flex: 224 1 0; }
.modify { flex: 249 1 0; }
.annotation { flex: 189 1 0; }
.layers { flex: 273 1 0; }
.block { flex: 108 1 0; }
.properties { flex: 222 1 0; }
.groups { flex: 69 1 0; }
.utilities { flex: 97 1 0; }
.clipboard { flex: 81 1 0; }
.view { flex: 60 1 0; border-right: 0; }
.ribbon-end { flex: none; width: 23px; background: linear-gradient(#f4f4f4, #9c9c9c); }
.panel-body { display: flex; height: 79px; }
.panel-title {
  display: flex; align-items: center; justify-content: center; gap: 7px;
  height: 18px; margin: 0 2px 1px 1px; background: #ededed; border-top: 1px solid #dcdcdc;
}
.title-btn { display: flex; align-items: center; justify-content: center; gap: 7px; flex: 1; }
.launcher { display: flex; width: 10px; }
.caret { border: 3px solid transparent; border-top-color: #3c3c3c; border-bottom: 0; width: 0; height: 0; flex: none; }
.caret.lg { border-width: 4px 4px 0; }

.big { display: flex; flex-direction: column; align-items: center; flex: none; padding-top: 6px; line-height: 15px; text-align: center; white-space: nowrap; }
.big svg { flex: none; margin-bottom: 4px; overflow: visible; }
.big .caret { margin-top: 3px; }
.stack { display: grid; grid-template-rows: repeat(3, 24px); padding-top: 4px; align-content: start; }
.stack.center { justify-items: center; }
.small { display: flex; align-items: center; gap: 5px; height: 22px; align-self: center; white-space: nowrap; }
.small svg { flex: none; }
.small.active { width: 24px; justify-content: center; background: #b9d8f3; border: 1px solid #1c6db5; }
.letter { font: 500 39px Roboto, sans-serif; fill: #404040; }

.draw .panel-body { display: grid; grid-template-columns: 40px 46px 54px 38px 44px; }
.draw .stack { padding-left: 6px; }
.tight .small { gap: 7px; }
.modify .panel-body { display: grid; grid-template-columns: 72px 69px 75px 18px; padding-left: 6px; }
.modify .wide { width: 62px; }
.wide .caret { margin-left: auto; }
.annotation .panel-body { display: grid; grid-template-columns: 48px 56px 1fr; }
.annotation .stack { padding-left: 9px; }
.annotation .wide { width: 68px; }
.layers .big, .properties .big { width: 62px; }
.block .big { width: 44px; }
.block .stack { padding-left: 2px; }
.groups .big { width: 42px; }
.groups .stack { width: 25px; }
.utilities .big { width: 72px; }
.utilities .stack { width: 20px; }
.clipboard .big { width: 54px; }
.clipboard .stack { width: 22px; }
.view .big { width: 60px; }

.layer-tools { flex: 1; padding: 5px 2px 0 0; }
.combo { display: flex; align-items: center; gap: 4px; height: 22px; padding: 0 1px 0 4px; border: 1px solid #c9c9c9; background: linear-gradient(#fff, #f1f1f1); }
.combo select { appearance: none; flex: 1; min-width: 0; }
.combo select.dark { color: #111; }
.combo .swatch { width: 14px; height: 14px; background: #000; flex: none; }
.combo.current { padding-left: 3px; gap: 3px; }
.combo.current select { padding-left: 5px; }
.tool-row { display: flex; align-items: center; gap: 8px; height: 24px; padding-left: 5px; }
.layer-tools .combo { margin-bottom: 1px; }
.prop-grid { flex: 1; display: grid; grid-template-columns: 16px 1fr; grid-template-rows: repeat(3, 24px); column-gap: 2px; align-items: center; padding: 4px 2px 0 2px; }
.prop-grid .swatch { margin-left: 8px; margin-right: 6px; }
.rule { width: 60px; margin-left: 4px; height: 1px; background: #111; flex: none; }
.rule.long { width: 64px; margin-left: 0; }

/* Drawing tabs */
.tabs { display: flex; align-items: flex-end; flex: none; height: 26px; padding-left: 24px; background: #b2b2b2; }
.tab { position: relative; display: flex; align-items: center; height: 23px; border-radius: 7px 9px 0 0; }
.tab::before { content: ""; position: absolute; left: -8px; bottom: 0; width: 8px; height: 12px; background: radial-gradient(ellipse 8px 12px at 0 0, transparent 98%, var(--tab-fill) 100%); }
.tab.start { --tab-fill: #c9c9c9; width: 122px; padding-left: 8px; background: linear-gradient(#d9d9d9, #c6c6c6); color: #767676; }
.tab.open { --tab-fill: #efefef; width: 180px; padding-left: 9px; gap: 9px; background: linear-gradient(#fafafa, #efefef); color: #111; }
.tab.open::after { content: ""; position: absolute; right: -8px; bottom: 0; width: 8px; height: 12px; background: radial-gradient(ellipse 8px 12px at 100% 0, transparent 98%, var(--tab-fill) 100%); }
.tab-close { display: flex; }
.tab-new { display: flex; align-items: center; justify-content: center; width: 22px; height: 14px; margin: 0 0 4px 6px; background: #dedede; border-radius: 3px 8px 2px 8px; }

/* Palette */
.workspace { display: flex; flex: 1; min-height: 0; }
.palette { display: flex; flex-direction: column; flex: none; width: 380px; padding: 5px 4px 0 2px; }
.palette-title { display: flex; align-items: center; gap: 6px; height: 21px; margin: 0; padding: 0 0 3px 4px; background: #e6e6e6; font-size: 11px; font-weight: 400; color: #111; }
.grip { width: 3px; height: 9px; background: repeating-linear-gradient(#aaa 0 1px, transparent 1px 2px); }
.palette-tools { display: flex; align-items: center; gap: 9px; height: 31px; padding: 0 4px; }
.palette-tools button { display: flex; }
.palette-tools button:first-child { margin-right: 5px; }
.tree-box { display: flex; flex: 1; min-height: 0; overflow: hidden; background: #fff; border: 1px solid #696969; border-bottom: 0; }
.tree { --dots-v: repeating-linear-gradient(#a8a8a8 0 1px, transparent 1px 2px); --dots-h: repeating-linear-gradient(90deg, #a8a8a8 0 1px, transparent 1px 2px); flex: 1; margin: 0; padding: 0; list-style: none; color: #0c0c14; white-space: nowrap; }
.tree li, .tree label { display: flex; align-items: center; }
.tree li { height: 18px; background-repeat: no-repeat; }
.tree svg { width: 16px; height: 16px; margin: 0 6px 0 5px; }
.tree .off { color: #787878; }
.tree .note { padding-left: 24px; }
.tree input { appearance: none; flex: none; width: 13px; height: 13px; margin: 0; padding: 1px; border: 1px solid #8a8d92; background: linear-gradient(135deg, #c9ccd2, #f7f8fa) content-box #f7f7f7; }
.tree input:checked::before { content: ""; display: block; width: 9px; height: 9px; background: #37478a; clip-path: polygon(6% 48%, 26% 38%, 42% 62%, 78% 0, 100% 0, 48% 100%, 32% 100%); }
.n0 input { margin-right: 27px; }
.n1 { padding-left: 4px; background-image: var(--dots-v), var(--dots-h); background-size: 1px 100%, 7px 1px; background-position: 8px 0, 12px 9px; }
.n1.last { background-size: 1px 9px, 7px 1px; }
.n1 input { margin: 0 27px 0 6px; }
.n2 { padding-left: 38px; background-image: var(--dots-v), var(--dots-h); background-size: 1px 100%, 9px 1px; background-position: 27px 0, 28px 9px; }
.n2.last { background-size: 1px 9px, 9px 1px; }
.n2.trunk { background-image: var(--dots-v), var(--dots-h), var(--dots-v); background-size: 1px 100%, 9px 1px, 1px 100%; background-position: 27px 0, 28px 9px, 8px 0; }
.n2.trunk.last { background-size: 1px 9px, 9px 1px, 1px 100%; }
.exp { width: 9px; height: 9px; border: 1px solid #919191; border-radius: 1px; background: linear-gradient(#3b4f9e, #3b4f9e) center / 5px 1px no-repeat #f8f8f8; }
.exp.plus { background: linear-gradient(#3b4f9e, #3b4f9e) center / 5px 1px no-repeat, linear-gradient(#3b4f9e, #3b4f9e) center / 1px 5px no-repeat #f8f8f8; }
.scroll { display: flex; flex-direction: column; flex: none; width: 16px; background: #f0f0f0; }
.scroll .thumb { flex: 375; background: #cdcdcd; margin: 280px 1px 48px 0; }

/* Drawing area */
.drawing { display: flex; flex-direction: column; flex: 1; min-width: 0; padding-top: 3px; }
.viewport { position: relative; flex: 1; min-height: 0; overflow: hidden; background: #d8d8d8; }
.model { display: block; }
.view-label { position: absolute; left: 3px; top: 7px; font-size: 12px; color: #f8f8f8; text-shadow: 0 0 1px #909090; }
.window-buttons { position: absolute; right: 11px; top: 9px; display: flex; gap: 8px; }
.window-buttons button { display: flex; }
.command { flex: none; display: flex; height: 8px; border-top: 2px solid #f4f4f4; background: #fff; box-shadow: inset 0 1px #7d7d7d; }
.model-tab { width: 54px; background: #858585; }

.green { fill: #96bc96; stroke: currentColor; stroke-width: 3; }
.road, .road-bed { fill: none; stroke-width: 11; stroke: currentColor; }
.road-bed { stroke-width: 5; stroke: #dce2dc; }
.plot { fill: #d8dcd0; stroke: currentColor; stroke-width: 3; }
.walls { fill: #e9ddbb; stroke: #8d877a; stroke-width: 3; }
.d96 { color: #5a6b62; }
.d48 { color: #0c5a1c; }
.caption { font: 24px "Liberation Sans", Arial, sans-serif; fill: #000; }
.dim-lines { fill: none; stroke: #f00; stroke-width: 1; }
.arrows { fill: #f00; }
.dim-text { font: 200 33px "DejaVu Sans Light", "DejaVu Sans", sans-serif; fill: #f00; }
.ucs { fill: none; stroke: #000; }
.ucs text { font: 200 18px "DejaVu Sans Light", "DejaVu Sans", sans-serif; fill: #000; stroke: none; }
.cursor { fill: none; stroke: #fff; }
```
